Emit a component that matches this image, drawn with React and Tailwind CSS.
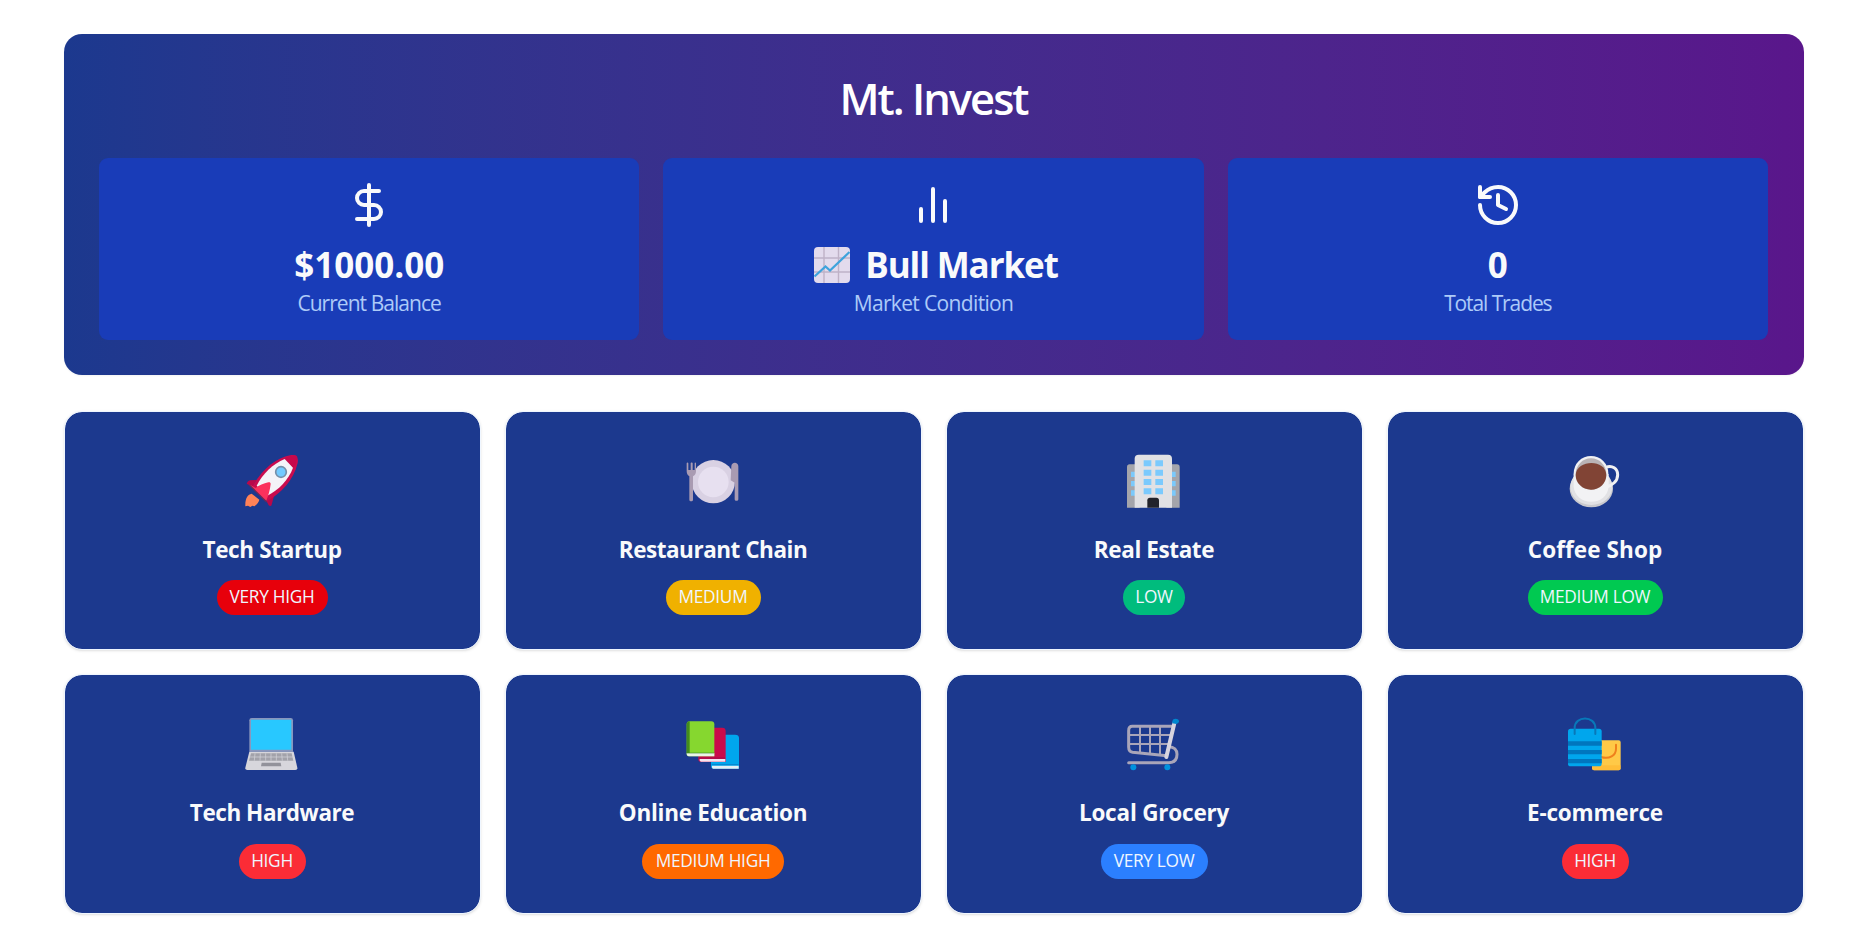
import { DollarSign, History } from "lucide-react";

function BarsIcon() {
  return (
    <svg width="48" height="48" viewBox="0 0 24 24" fill="none" stroke="currentColor" strokeWidth="2" strokeLinecap="round">
      <path d="M18 20V10M12 20V4M6 20v-6" />
    </svg>
  );
}

function ChartEmoji() {
  return (
    <svg className="shrink-0" width="36" height="36" viewBox="0 0 36 36">
      <rect width="36" height="36" rx="4" fill="#e3dbed" />
      <path d="M10 0v36M24.5 0v36M0 11h36M0 25h36" stroke="#bfb2c7" strokeWidth="1.4" />
      <path d="M.5 29.500 11.500 19.500l4.500 4L35.500 5" stroke="#3fa3dc" strokeWidth="2.200" fill="none" />
    </svg>
  );
}

const Rocket = () => (
  <svg width="54" height="54" viewBox="586 159 162 162">
    <path d="M606 278c-12 2-20 14-19 38l8-2 7 4 6-4 6 2c9-6 14-14 15-20z" fill="#ff8257" />
    <path d="M620 237l-19 1c-5 1-7 4-10 10l17 9zM676 274l-10 37c-1 5-6 5-9 2l-7-14z" fill="#b9084a" />
    <path d="M607 258l39 40 8 1c40-22 78-62 90-113 3-14-3-25-19-24-46 6-90 46-118 96z" fill="#c90b4e" />
    <path d="M621 254c18-36 50-66 84-80l25 26c-13 36-42 66-77 84z" fill="#f4f3f8" />
    <path d="M707 171l24 29c5-9 10-20 12-30 0-5-4-8-9-8-10 2-19 5-27 9z" fill="#c6084b" />
    <path d="M598 250l44 45 8 4c6-15 11-32 13-50 0-5-3-6-7-5-14 3-28 9-38 17z" fill="#fb315d" />
    <path d="M598 251l53 52" stroke="#6d2956" strokeWidth="4" />
    <circle cx="694" cy="213" r="16" fill="#73caff" stroke="#758fa9" strokeWidth="5" />
  </svg>
);

const Plate = () => (
  <svg width="54" height="54" viewBox="79 39 162 162">
    <circle cx="161" cy="122" r="65" fill="#d9d1e3" />
    <circle cx="161" cy="123" r="46" fill="#e7e0f0" />
    <path d="M81 67v24c0 8 4 13 8 15v70c0 6 11 6 11 0v-70c5-2 9-7 9-15V67c0-3-4-3-4 0v20h-6V67c0-3-6-3-6 0v20h-7V67c0-3-5-3-5 0z" fill="#a99bb2" />
    <path d="M215 76c0-14 21-14 21 0v99c0 6-11 6-11 0v-50l-12-7z" fill="#a99bb2" />
  </svg>
);

const Building = () => (
  <svg width="54" height="54" viewBox="52 39 162 162">
    <path d="M52 78q0-8 8-8h30v130H52zM170 70h32q8 0 8 8v122h-40z" fill="#a4a5ab" />
    <path d="M64 92h14v16H64zm0 28h14v16H64zm0 28h14v16H64zM184 92h14v16h-14zm0 28h14v16h-14zm0 28h14v16h-14z" fill="#7bc9fb" />
    <path d="M75 200V53q0-12 12-12h88q12 0 12 12v147z" fill="#e1e1e4" />
    <path d="M102 58h23v18h-23zm35 0h23v18h-23zm-35 28h23v18h-23zm35 0h23v18h-23zm-35 28h23v18h-23zm35 0h23v18h-23zm-35 28h23v18h-23zm35 0h23v18h-23z" fill="#7bcafd" />
    <path d="M113 200v-22q0-8 8-8h19q8 0 8 8v22z" fill="#22232b" />
  </svg>
);

const Coffee = () => (
  <svg width="54" height="54" viewBox="55 39 162 162">
    <ellipse cx="125" cy="143" rx="65" ry="56" fill="#c9c9ce" />
    <ellipse cx="125" cy="137" rx="63" ry="55" fill="#e1e1e4" />
    <path d="M168 79c20-8 36 4 36 22 0 20-17 33-33 36" fill="none" stroke="#f1f1f3" strokeWidth="9" />
    <path d="M72 99v38c3 27 25 45 53 45s49-18 52-45V99z" fill="#f2f2f4" />
    <ellipse cx="124" cy="97" rx="52" ry="52" fill="#f1f1f3" />
    <ellipse cx="124" cy="99" rx="46" ry="47" fill="#b9b3b5" />
    <path d="M78 102c2-46 90-50 92 0 0 25-20 44-46 44s-46-20-46-44z" fill="#814435" />
  </svg>
);

const Laptop = () => (
  <svg width="54" height="54" viewBox="46 49 162 162">
    <path d="M59 59q0-7 7-7h117q7 0 7 7v94H59z" fill="#8997bd" />
    <path d="M64 57h121v90H64z" fill="#28c8ff" />
    <path d="M59 153h133l11 48q1 7-6 7H53q-7 0-6-7z" fill="#d7d6dc" />
    <path d="M64 158h122l5 22H58z" fill="#a2a2aa" />
    <path d="M60 169h130M76 158l-2 22M92 158l-1 22M108 158v22M124 158v22M140 158v22M156 158l2 22M172 158l2 22" stroke="#d7d6dc" strokeWidth="2" />
    <path d="M96 186h57l2 11H94z" fill="#92929b" />
  </svg>
);

const Books = () => (
  <svg width="54" height="54" viewBox="49 49 162 162">
    <path d="M124 102h72q12 0 12 10v92h-76q-8 0-8-8z" fill="#00a6ed" />
    <path d="M127 195h80v9h-76q-5 0-4-9z" fill="#e4eef5" />
    <path d="M86 81h72q10 0 10 10v93H94q-8 0-8-8z" fill="#ca0b4a" />
    <path d="M90 175h77v8H95q-6 0-5-8z" fill="#f4e4f0" />
    <path d="M51 71q0-9 9-9h65q9 0 9 9v96H59q-8 0-8-8z" fill="#86d72f" />
    <path d="M51 71q0-8 9-9v96h-9z" fill="#438c1d" />
    <path d="M51 157h83v10H58q-7 0-7-10z" fill="#e9f5e7" />
    <path d="M51 157h83" stroke="#3e8b27" strokeWidth="2" />
    <path d="M88 172h78" stroke="#8c0c48" strokeWidth="2" />
    <path d="M126 192h81" stroke="#0c71bb" strokeWidth="2" />
  </svg>
);

const Cart = () => (
  <svg width="54" height="54" viewBox="52 49 162 162">
    <g fill="none" stroke="#a9a5b9" strokeLinecap="round" strokeLinejoin="round">
      <path d="M190 77H68q-11 0-11 13v49q0 14 12 16l102 10" strokeWidth="9" />
      <path d="M91 80v75M121 80v79M151 80v81M59 103h122M59 130h116" strokeWidth="6" />
      <path d="M177 138c16 0 25 10 25 23 0 17-10 25-24 25H57" strokeWidth="9" />
    </g>
    <path d="M194 68l-24 101" stroke="#d7d4df" strokeWidth="12" strokeLinecap="round" />
    <path d="M188 61q2-7 9-7 11 0 11 8 0 7-8 8l-12-2z" fill="#0087cf" />
    <circle cx="71" cy="200" r="9" fill="#0092de" />
    <circle cx="173" cy="200" r="9" fill="#0092de" />
  </svg>
);

const Bags = () => (
  <svg width="54" height="54" viewBox="55 49 162 162">
    <path d="M137 119h70q6 0 6 6v78q0 6-6 6h-74q-6 0-6-6v-78z" fill="#ffc947" />
    <path d="M128 194h85v9q0 6-6 6h-74q-6 0-6-6z" fill="#ffb52e" opacity=".6" />
    <path d="M199 132v12c0 20-20 33-45 25" fill="none" stroke="#ef801c" strokeWidth="6" strokeLinecap="round" />
    <rect x="55" y="84" width="101" height="113" rx="8" fill="#00a6ed" />
    <path d="M55 122h101v13H55zm0 26h101v13H55zm0 27h101v13H55z" fill="#0076be" />
    <path d="M75 100V82c0-38 62-38 62 0v18" fill="none" stroke="#0878b9" strokeWidth="6" strokeLinecap="round" />
  </svg>
);

function Stat({ icon, value, label, labelClass, valueClass }) {
  return (
    <div className="flex h-[182.500px] flex-1 flex-col items-center rounded-[9px] bg-blue-800 pt-[23px]">
      {icon}
      <div className={`mt-[16px] flex h-[40px] items-center text-[35px] font-bold leading-[40px] text-gray-50 ${valueClass}`}>{value}</div>
      <div className={`mt-[4px] text-[21px] leading-[28px] text-blue-200/90 ${labelClass}`}>{label}</div>
    </div>
  );
}

const ventures = [
  { Icon: Rocket, name: "Tech Startup", risk: "VERY HIGH", color: "bg-red-600", width: "w-[111px]", track: "tracking-[-0.35px]" },
  { Icon: Plate, name: "Restaurant Chain", risk: "MEDIUM", color: "bg-yellow-500", width: "w-[95px]", track: "tracking-[-0.48px]" },
  { Icon: Building, name: "Real Estate", risk: "LOW", color: "bg-emerald-500", width: "w-[62px]", track: "tracking-[-0.4px]" },
  { Icon: Coffee, name: "Coffee Shop", risk: "MEDIUM LOW", color: "bg-green-500", width: "w-[135px]", track: "tracking-[0.1px]" },
  { Icon: Laptop, name: "Tech Hardware", risk: "HIGH", color: "bg-red-500", width: "w-[67px]", track: "tracking-[-0.45px]" },
  { Icon: Books, name: "Online Education", risk: "MEDIUM HIGH", color: "bg-orange-500", width: "w-[142px]", track: "tracking-[-0.25px]" },
  { Icon: Cart, name: "Local Grocery", risk: "VERY LOW", color: "bg-blue-500", width: "w-[107px]", track: "tracking-[-0.2px]" },
  { Icon: Bags, name: "E-commerce", risk: "HIGH", color: "bg-red-500", width: "w-[67px]", track: "tracking-[-0.2px]" },
];

function VentureCard({ Icon, name, risk, color, width, track }) {
  return (
    <div className="flex h-[239.800px] flex-col items-center rounded-[18px] border border-blue-50 bg-blue-900 bg-clip-padding pt-[42px] shadow-sm">
      <Icon />
      <h2 className={`mt-[26px] text-[22.500px] font-bold leading-[32px] whitespace-nowrap text-gray-50 ${track}`}>{name}</h2>
      <span className={`mt-[14.500px] flex h-[35px] items-center justify-center rounded-full pb-px text-[17.300px] tracking-[-0.3px] whitespace-nowrap text-blue-50 ${color} ${width}`}>
        {risk}
      </span>
    </div>
  );
}

export default function App() {
  return (
    <main className="h-[929px] overflow-hidden bg-white pt-[34px] pl-[63.500px] font-['Open_Sans','Noto_Sans',sans-serif]">
      <div className="w-[1740px]">
        <header className="h-[341px] rounded-[18px] bg-linear-to-r from-blue-900 to-purple-900 px-[35.500px] pt-[36px] shadow-xs">
          <h1 className="text-center text-[43.500px] font-semibold leading-[57px] tracking-[-2px] text-white">Mt. Invest</h1>
          <div className="mt-[30.500px] flex gap-6">
            <Stat icon={<DollarSign size={48} color="#f9fafb" />} value="$1000.00" label="Current Balance" valueClass="" labelClass="tracking-[-0.95px]" />
            <Stat
              icon={<span className="text-gray-50"><BarsIcon /></span>}
              value={<><ChartEmoji /><span>Bull Market</span></>}
              label="Market Condition"
              valueClass="gap-[15px] pl-[5px] tracking-[-1.1px]"
              labelClass="tracking-[-0.65px]"
            />
            <Stat icon={<History size={48} color="#f9fafb" />} value="0" label="Total Trades" valueClass="" labelClass="tracking-[-1.1px]" />
          </div>
        </header>
        <section className="mt-[35.500px] grid grid-cols-4 gap-6">
          {ventures.map((v) => (
            <VentureCard key={v.name} {...v} />
          ))}
        </section>
      </div>
    </main>
  );
}
